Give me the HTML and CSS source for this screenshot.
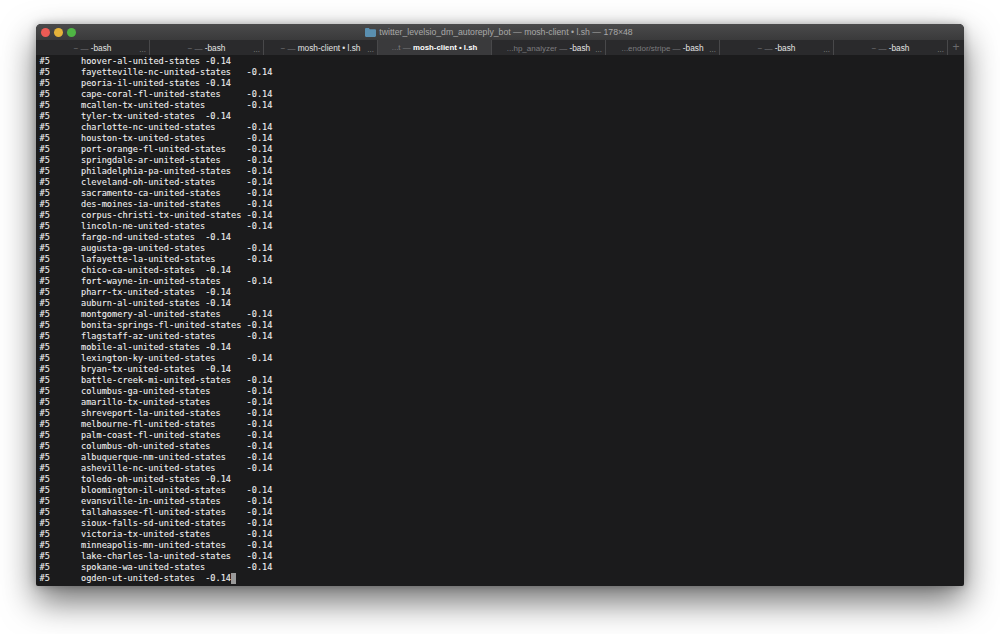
FILE: index.html
```html
<!DOCTYPE html>
<html lang="en">
<head>
<meta charset="utf-8">
<title>Terminal</title>
<link rel="stylesheet" href="styles.css">
</head>
<body>
<main class="window">
  <header class="titlebar">
    <div class="lights">
      <span class="light red"></span>
      <span class="light yellow"></span>
      <span class="light green"></span>
    </div>
    <div class="title">
      <svg class="folder" width="11" height="9" viewBox="0 0 11 9"><path d="M0 1.2C0 .5.5 0 1.2 0h2.6l1 1.2h5c.7 0 1.2.5 1.2 1.2v5.4c0 .7-.5 1.2-1.2 1.2H1.2C.5 9 0 8.5 0 7.8z" fill="#5a8fb0"/></svg>
      <span>twitter_levelsio_dm_autoreply_bot — mosh-client • l.sh — 178×48</span>
    </div>
  </header>
  <nav class="tabs">
    <div class="tab"><span class="tab-label"><span class="dim">~ — </span>-bash</span><span class="more">...</span></div>
    <div class="tab"><span class="tab-label"><span class="dim">~ — </span>-bash</span><span class="more">...</span></div>
    <div class="tab"><span class="tab-label"><span class="dim">~ — </span>mosh-client • l.sh</span><span class="more">...</span></div>
    <div class="tab active"><span class="tab-label"><span class="dim">...t — </span>mosh-client • l.sh</span></div>
    <div class="tab"><span class="tab-label"><span class="dim">...hp_analyzer — </span>-bash</span><span class="more">...</span></div>
    <div class="tab"><span class="tab-label"><span class="dim">...endor/stripe — </span>-bash</span><span class="more">...</span></div>
    <div class="tab"><span class="tab-label"><span class="dim">~ — </span>-bash</span><span class="more">...</span></div>
    <div class="tab"><span class="tab-label"><span class="dim">~ — </span>-bash</span><span class="more">...</span></div>
    <div class="plus">+</div>
  </nav>
  <pre class="term">#5	hoover-al-united-states	-0.14
#5	fayetteville-nc-united-states	-0.14
#5	peoria-il-united-states	-0.14
#5	cape-coral-fl-united-states	-0.14
#5	mcallen-tx-united-states	-0.14
#5	tyler-tx-united-states	-0.14
#5	charlotte-nc-united-states	-0.14
#5	houston-tx-united-states	-0.14
#5	port-orange-fl-united-states	-0.14
#5	springdale-ar-united-states	-0.14
#5	philadelphia-pa-united-states	-0.14
#5	cleveland-oh-united-states	-0.14
#5	sacramento-ca-united-states	-0.14
#5	des-moines-ia-united-states	-0.14
#5	corpus-christi-tx-united-states	-0.14
#5	lincoln-ne-united-states	-0.14
#5	fargo-nd-united-states	-0.14
#5	augusta-ga-united-states	-0.14
#5	lafayette-la-united-states	-0.14
#5	chico-ca-united-states	-0.14
#5	fort-wayne-in-united-states	-0.14
#5	pharr-tx-united-states	-0.14
#5	auburn-al-united-states	-0.14
#5	montgomery-al-united-states	-0.14
#5	bonita-springs-fl-united-states	-0.14
#5	flagstaff-az-united-states	-0.14
#5	mobile-al-united-states	-0.14
#5	lexington-ky-united-states	-0.14
#5	bryan-tx-united-states	-0.14
#5	battle-creek-mi-united-states	-0.14
#5	columbus-ga-united-states	-0.14
#5	amarillo-tx-united-states	-0.14
#5	shreveport-la-united-states	-0.14
#5	melbourne-fl-united-states	-0.14
#5	palm-coast-fl-united-states	-0.14
#5	columbus-oh-united-states	-0.14
#5	albuquerque-nm-united-states	-0.14
#5	asheville-nc-united-states	-0.14
#5	toledo-oh-united-states	-0.14
#5	bloomington-il-united-states	-0.14
#5	evansville-in-united-states	-0.14
#5	tallahassee-fl-united-states	-0.14
#5	sioux-falls-sd-united-states	-0.14
#5	victoria-tx-united-states	-0.14
#5	minneapolis-mn-united-states	-0.14
#5	lake-charles-la-united-states	-0.14
#5	spokane-wa-united-states	-0.14
#5	ogden-ut-united-states	-0.14<span class="cursor"></span></pre>
</main>
</body>
</html>
```
FILE: styles.css
```css
html, body {
  margin: 0;
  height: 100%;
  background: #fff;
}
body {
  padding: 24px 36px 48px;
  box-sizing: border-box;
  overflow: hidden;
}
.window {
  height: 562px;
  display: flex;
  flex-direction: column;
  border-radius: 5px 5px 2px 2px;
  overflow: hidden;
  background: #1b1b1c;
  box-shadow: 0 15px 34px rgba(0, 0, 0, 0.58), 0 0 8px rgba(0, 0, 0, 0.25);
  font-family: "Liberation Sans", Arial, sans-serif;
}
.titlebar {
  height: 16px;
  flex: none;
  position: relative;
  display: flex;
  align-items: center;
  justify-content: center;
  padding-right: 2px;
  background: linear-gradient(#4a4a4b, #3a3a3b);
}
.lights {
  position: absolute;
  left: 4.5px;
  top: 3.5px;
  display: flex;
  gap: 4px;
}
.light {
  width: 9px;
  height: 9px;
  border-radius: 50%;
}
.red { background: #ec5b55; }
.yellow { background: #e5b33a; }
.green { background: #4fb544; }
.title {
  display: flex;
  align-items: center;
  gap: 3px;
  font-size: 8.7px;
  color: #a8a8a8;
  white-space: nowrap;
}
.tabs {
  height: 15px;
  flex: none;
  display: flex;
  background: #2a2a2c;
}
.tab {
  width: 114px;
  box-sizing: border-box;
  border-right: 1px solid #48484a;
  position: relative;
  display: flex;
  align-items: center;
  justify-content: center;
  font-size: 8.3px;
  color: #e4e4e4;
  white-space: nowrap;
}
.tab.active {
  background: #3a3a3c;
  color: #fff;
  font-size: 7.8px;
  font-weight: 700;
}
.dim {
  color: #7c7c7f;
  font-size: 8px;
  font-weight: 400;
}
.more {
  position: absolute;
  right: 3px;
  bottom: 1px;
  color: #8a8a8a;
  font-size: 8px;
}
.plus {
  flex: 1;
  text-align: center;
  font-size: 12px;
  line-height: 15px;
  color: #6a6a6c;
}
.term {
  flex: 1;
  margin: 0;
  padding: 1px 3.6px 0;
  color: #f0f0f0;
  font-family: "DejaVu Sans Mono", "Liberation Mono", monospace;
  font-size: 8.6px;
  line-height: 11px;
  tab-size: 8;
  white-space: pre;
  overflow: hidden;
  -webkit-text-stroke: 0.08px #f0f0f0;
}
.cursor {
  display: inline-block;
  width: 5px;
  height: 11px;
  margin-top: -2px;
  vertical-align: -2.5px;
  background: #9a9a9a;
}
```
